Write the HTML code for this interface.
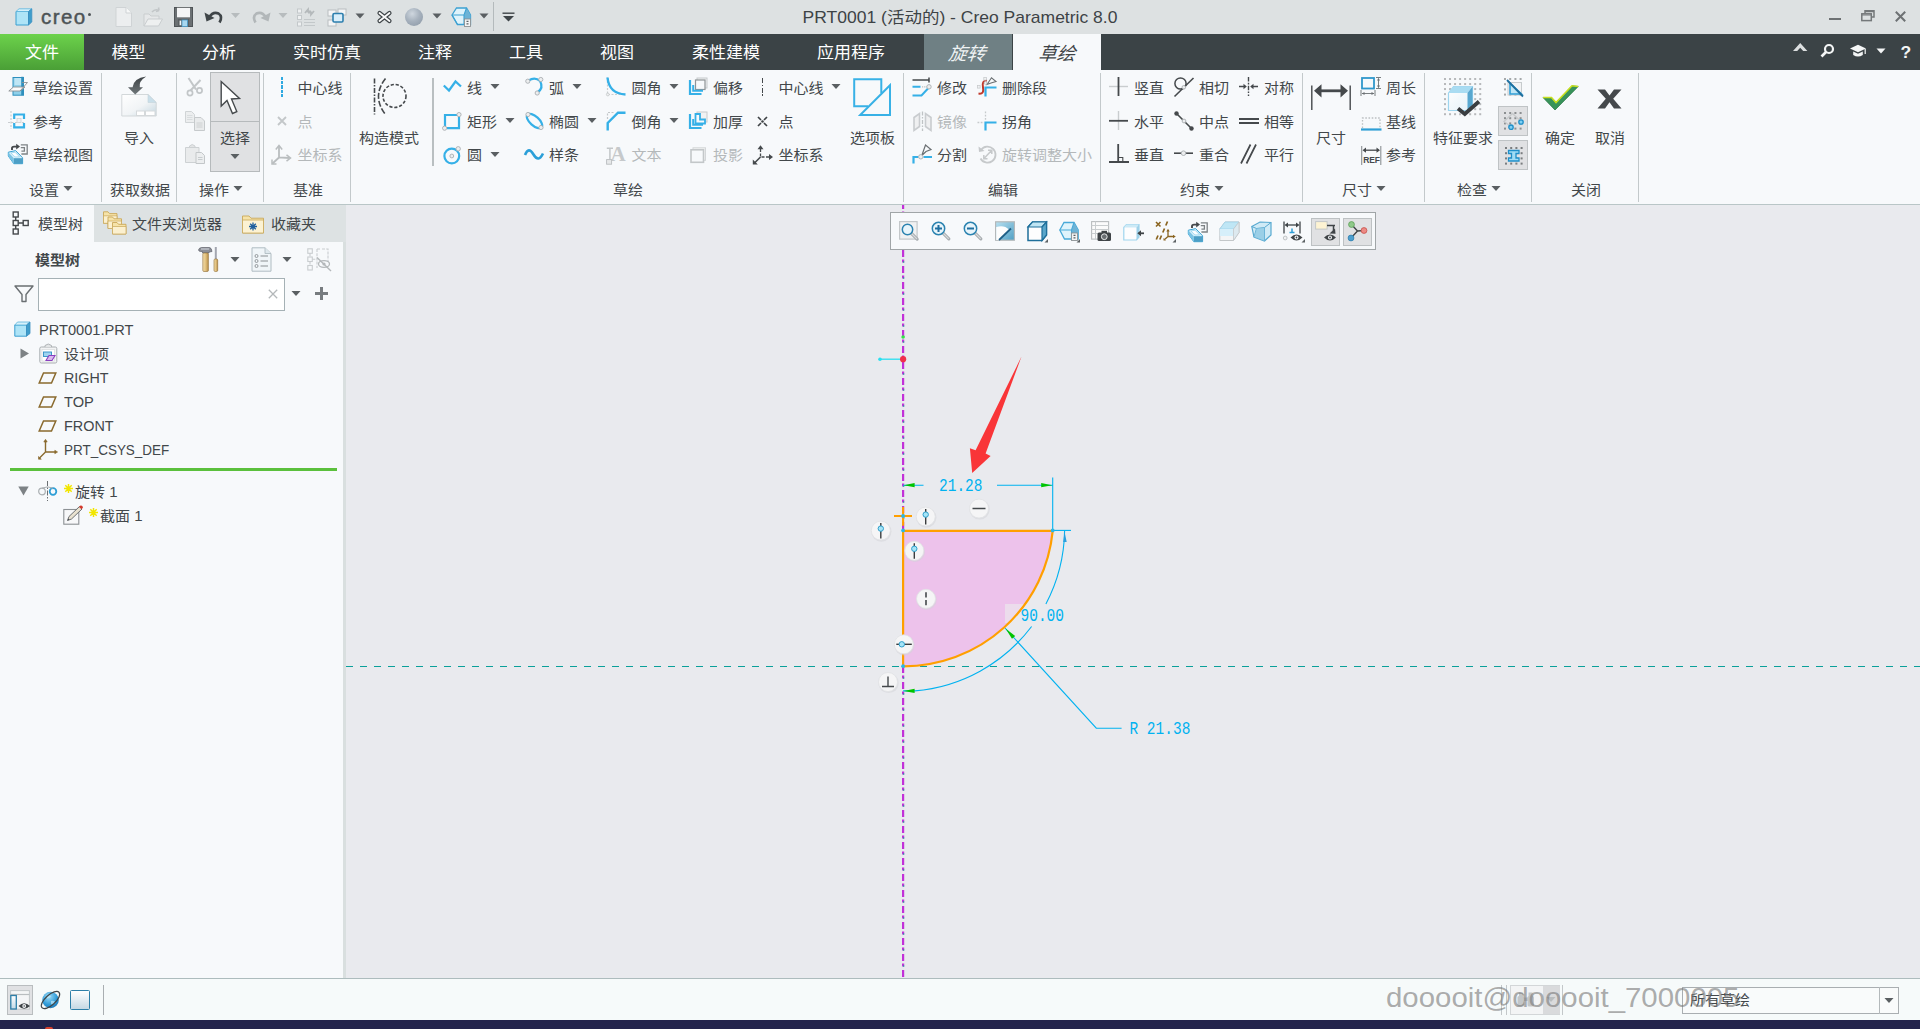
<!DOCTYPE html>
<html lang="zh-CN"><head><meta charset="utf-8"><title>Creo Parametric</title>
<style>
*{box-sizing:border-box;margin:0;padding:0}
html,body{width:1920px;height:1029px;overflow:hidden;background:#f6f9fa}
body{position:relative;font-family:"Liberation Sans","Noto Sans CJK SC",sans-serif;font-size:15px;color:#3a3f42}
.a{position:absolute}
.t{position:absolute;white-space:nowrap;line-height:20px;height:20px;font-size:15px;color:#42474a;transform:scaleY(.92)}
.g{color:#b4b8ba}
.t.c{transform:translateX(-50%) scaleY(.92)}
.l{transform-origin:left center}
.sep{position:absolute;width:1px;background:#c3c9cb;top:73px;height:129px}
.dd{position:absolute;width:0;height:0;border-left:4.6px solid transparent;border-right:4.6px solid transparent;border-top:5.2px solid #5a5f62}
svg{position:absolute;overflow:visible}
#title{left:0;top:0;width:1920px;height:34px;background:#dde1e2}
#tabs{left:0;top:34px;width:1920px;height:36px;background:#3b4346}
#file{left:0;top:34px;width:84px;height:36px;background:linear-gradient(#6cd24b,#4a9f36)}
.tab{position:absolute;top:41px;height:24px;line-height:24px;font-size:17px;color:#fff;white-space:nowrap;transform:translateX(-50%) scaleY(.93)}
#ribbon{left:0;top:70px;width:1920px;height:134px;background:#f7f9fb}
#ribline{left:0;top:204px;width:1920px;height:1px;background:#b9c6c7}
#left{left:0;top:205px;width:343px;height:773px;background:#f7f9fb}
#canvas{left:346px;top:205px;width:1574px;height:773px;background:#e9eaee}
#status{left:0;top:978px;width:1920px;height:42px;background:#f6fafa;border-top:1px solid #adbcbd}
#dark{left:0;top:1020px;width:1920px;height:9px;background:#23244c}
</style></head>
<body>
<!-- p1 -->
<div class="a" id="title"></div>
<svg style="left:15px;top:8px" width="18" height="18" viewBox="0 0 18 18"><path d="M1 3.5 L13.5 3.5 L13.5 17 L1 17Z" fill="#aee4f7" stroke="#3b9fd0" stroke-width="1"/><path d="M1 3.5 L4 0.8 L16.8 0.8 L13.5 3.5Z" fill="#d6f1fb" stroke="#5ab4dc" stroke-width=".8"/><path d="M13.5 3.5 L16.8 0.8 L16.8 14 L13.5 17Z" fill="#3f9dcb" stroke="#3b8fc0" stroke-width=".8"/></svg>
<div class="t" style="left:41px;top:4.5px;font-size:20.5px;letter-spacing:1.4px;color:#4d5356;-webkit-text-stroke:.45px #4d5356;line-height:24px;height:24px;transform:none">creo</div><div class="a" style="left:87.8px;top:13px;width:3px;height:3px;border-radius:50%;background:#4d5356"></div>
<svg style="left:115px;top:7px" width="18" height="20" viewBox="0 0 18 20"><path d="M1 .5 H11 L16.5 6 V19.5 H1Z" fill="#eceeef" stroke="#cfd3d5"/><path d="M11 .5 V6 H16.5" fill="#f7f8f8" stroke="#cfd3d5"/></svg>
<svg style="left:143px;top:7px" width="20" height="20" viewBox="0 0 20 20"><path d="M1 19 V7 H6 L8 9 H16 V12" fill="#e6e8e9" stroke="#c9cdcf"/><path d="M1 19 L5 12 H19.5 L15.5 19Z" fill="#eef0f0" stroke="#c9cdcf"/><path d="M9 5 Q12 1.5 16 3.5 M16 3.5 L15.5 .5 M16 3.5 L13 4.5" fill="none" stroke="#c2c6c8" stroke-width="1.6"/></svg>
<svg style="left:174px;top:7px" width="19" height="20" viewBox="0 0 19 20"><rect x=".5" y=".5" width="18" height="19" fill="#6b7073" stroke="#4f5457"/><rect x="3" y=".8" width="13" height="9.5" fill="#f4f5f6"/><rect x="4" y="12" width="11" height="7.5" fill="#5a5f62"/><rect x="8" y="13" width="5.5" height="6.5" fill="#a9d8f0" stroke="#4b9cc9" stroke-width=".8"/><rect x="5.6" y="13.6" width="1.6" height="4.6" fill="#f4f5f6"/></svg>
<svg style="left:204px;top:9px" width="20" height="16" viewBox="0 0 20 16"><path d="M5 8.5 Q9 2 14.5 4.5 Q19 7.5 15.5 13.5" fill="none" stroke="#3f4548" stroke-width="2.6"/><path d="M.5 3.5 L2.5 12.5 L10.5 9Z" fill="#3f4548"/></svg>
<svg style="left:230px;top:12px" width="11" height="8" viewBox="0 0 11 8"><path d="M1 0.9 h9 l-4.5 5.2Z" fill="#b7bcbe"/></svg>
<svg style="left:251px;top:9px" width="20" height="16" viewBox="0 0 20 16"><path d="M15 8.5 Q11 2 5.5 4.5 Q1 7.5 4.5 13.5" fill="none" stroke="#b2b7b9" stroke-width="2.6"/><path d="M19.5 3.5 L17.5 12.5 L9.5 9Z" fill="#b2b7b9"/></svg>
<svg style="left:278px;top:12px" width="11" height="8" viewBox="0 0 11 8"><path d="M0.5 0.9 h9 l-4.5 5.2Z" fill="#b7bcbe"/></svg>
<svg style="left:297px;top:7px" width="20" height="20" viewBox="0 0 20 20"><g fill="#eef0f1" stroke="#c3c8ca" stroke-width="1"><rect x=".5" y="2" width="4" height="4"/><rect x=".5" y="8.5" width="4" height="4"/><rect x=".5" y="15" width="4" height="4"/></g><g stroke="#c3c8ca" stroke-width="1.2"><path d="M7 12.5 H18 M7 15.5 H18 M7 18.5 H18"/></g><path d="M8 6 L11 2.5 L11 4.5 H14 M17 4 L14 7.5 L14 5.5 H11" fill="none" stroke="#b4b9bb" stroke-width="1.8"/></svg>
<svg style="left:327px;top:8px" width="20" height="19" viewBox="0 0 20 19"><g fill="#f4f5f6" stroke="#b9bec0"><rect x="1" y="2" width="8" height="6"/><rect x="11" y="1" width="8" height="6"/><rect x="1" y="12" width="8" height="6"/></g><rect x="6" y="5.5" width="10" height="8.5" rx="1.2" fill="#d9eefa" stroke="#2d7fae" stroke-width="1.6"/></svg>
<svg style="left:355px;top:13px" width="11" height="8" viewBox="0 0 11 8"><path d="M0.5 0.4 h9 l-4.5 5.2Z" fill="#5a5f62"/></svg>
<svg style="left:377px;top:11px" width="15" height="12" viewBox="0 0 15 12"><path d="M2.5 2 L12.5 10 M12.5 2 L2.5 10" stroke="#3f4548" stroke-width="4.2" stroke-linecap="round"/><path d="M2.5 2 L12.5 10 M12.5 2 L2.5 10" stroke="#fbfbfb" stroke-width="1.8" stroke-linecap="round"/></svg>
<div class="a" style="left:405px;top:8px;width:18px;height:18px;border-radius:50%;background:radial-gradient(circle at 40% 32%,#cfd7df 0,#a7b2be 45%,#8895a3 100%)"></div>
<svg style="left:432px;top:13px" width="11" height="8" viewBox="0 0 11 8"><path d="M0.5 0.4 h9 l-4.5 5.2Z" fill="#5a5f62"/></svg>
<svg style="left:451px;top:7px" width="21" height="20" viewBox="0 0 21 20"><path d="M1 8 L5.5 1 L15.5 1 L19.5 8 L19.5 17.5 L6.5 17.5Z" fill="#dff3fb" stroke="#3da1d2" stroke-width="1.3"/><path d="M15.5 1 L19.5 8 V17.5 H13 V8Z" fill="#6db3d6"/><path d="M1 8 H13 L15.5 1 M6.5 17.5 L1 8 M13 8 V17.5" fill="none" stroke="#3da1d2" stroke-width="1.1"/><rect x="13.5" y="12" width="6" height="7.5" fill="#f3f4f5" stroke="#8d9294" stroke-width=".9"/><path d="M15.5 14.3 h2 M15.5 16.8 h2" stroke="#5d6265" stroke-width="1.2"/></svg>
<svg style="left:479px;top:13px" width="11" height="8" viewBox="0 0 11 8"><path d="M0.5 0.4 h9 l-4.5 5.2Z" fill="#5a5f62"/></svg>
<div class="a" style="left:493px;top:2px;width:1px;height:29px;background:#b4babc"></div>
<svg style="left:502px;top:12px" width="13" height="10" viewBox="0 0 13 10"><path d="M.5 1.2 H12.5" stroke="#3f4548" stroke-width="1.4"/><path d="M1 4 H12 L6.5 9.5Z" fill="#3f4548"/></svg>
<div class="t c" id="ttl" style="left:960px;top:5px;font-size:17.5px;line-height:24px;height:24px;color:#3d4346">PRT0001 (活动的) - Creo Parametric 8.0</div>
<div class="a" style="left:1829px;top:17.5px;width:11.5px;height:2.6px;background:#6d7173"></div>
<svg style="left:1860.5px;top:10.2px" width="14" height="12" viewBox="0 0 14 12"><path d="M4 3 V.8 H13 V7 H10.5" fill="none" stroke="#74787a" stroke-width="1.5"/><rect x=".8" y="3.8" width="9.5" height="6.8" fill="none" stroke="#74787a" stroke-width="1.5"/><path d="M.8 5 H10.3 M4 1.600 H13" stroke="#74787a" stroke-width="1.200"/></svg>
<svg style="left:1894.8px;top:10.5px" width="11" height="11" viewBox="0 0 11 11"><path d="M.8 .8 L10.2 10.2 M10.2 .8 L.8 10.2" stroke="#6d7173" stroke-width="2"/></svg>
<div class="a" id="tabs"></div><div class="a" id="file"></div>
<div class="a" style="left:924px;top:34px;width:87.5px;height:36px;background:#6f8084"></div>
<div class="a" style="left:1013px;top:34px;width:88px;height:36px;background:#f7f9fb"></div>
<div class="tab" style="left:42px">文件</div>
<div class="tab" style="left:128.5px">模型</div>
<div class="tab" style="left:219px">分析</div>
<div class="tab" style="left:327px">实时仿真</div>
<div class="tab" style="left:435px">注释</div>
<div class="tab" style="left:526px">工具</div>
<div class="tab" style="left:617px">视图</div>
<div class="tab" style="left:726px">柔性建模</div>
<div class="tab" style="left:851px">应用程序</div>
<div class="tab" style="left:967px;top:41.5px;font-size:18.5px;font-style:italic;transform:translateX(-50%) scaleY(.98) skewX(-6deg);color:#eef2f3">旋转</div>
<div class="tab" style="left:1056.5px;top:41.5px;font-size:18.5px;font-style:italic;transform:translateX(-50%) scaleY(.98) skewX(-6deg);color:#3f4447">草绘</div>
<svg style="left:1793px;top:43px" width="15" height="9" viewBox="0 0 15 9"><path d="M0 8 L7.2 0 L14.4 8 H10.2 L7.2 4.8 L4.2 8Z" fill="#dcdfe0"/></svg>
<svg style="left:1820px;top:43px" width="15" height="15" viewBox="0 0 15 15"><circle cx="9" cy="6" r="4" fill="none" stroke="#f4f6f6" stroke-width="2.2"/><path d="M6 9 L1.5 13.5" stroke="#f4f6f6" stroke-width="2.6"/></svg>
<svg style="left:1849px;top:44px" width="18" height="14" viewBox="0 0 18 14"><path d="M9 .8 L17 4.5 L9 8.2 L1 4.5Z" fill="#f4f6f6"/><path d="M4.2 7.5 V11 Q9 14 13.8 11 V7.5 L9 9.8Z" fill="#f4f6f6"/><path d="M16.2 5 V10" stroke="#f4f6f6" stroke-width="1.2"/></svg>
<svg style="left:1876px;top:48px" width="11" height="8" viewBox="0 0 11 8"><path d="M0.5 0.4 h9 l-4.5 5.2Z" fill="#f4f6f6"/></svg>
<div class="t" style="left:1900.5px;top:40.5px;font-size:17.5px;font-weight:bold;color:#f4f6f6;line-height:22px;height:22px">?</div>
<!-- p2 -->
<div class="a" id="ribbon"></div><div class="a" id="ribline"></div>
<div class="sep" style="left:101px;"></div>
<div class="sep" style="left:176px;"></div>
<div class="sep" style="left:263px;"></div>
<div class="sep" style="left:350px;"></div>
<div class="sep" style="left:903px;"></div>
<div class="sep" style="left:1100px;"></div>
<div class="sep" style="left:1302px;"></div>
<div class="sep" style="left:1424px;"></div>
<div class="sep" style="left:1531px;"></div>
<div class="sep" style="left:1638px;"></div>
<div class="a" style="left:432px;top:78px;width:2px;height:88px;background:#b9bfc1"></div>
<svg style="left:8px;top:76px" width="20" height="20" viewBox="0 0 20 20"><rect x="5" y="1.5" width="10.5" height="17.7" fill="#8fd0ea" stroke="#2e8fbd" stroke-width="1"/><rect x="6.5" y="2" width="7.5" height="7" fill="#bfe6f5"/><path d="M13.2 .8 V19.2 H15.5 V.8Z" fill="#2e8fbd"/><path d="M.8 15 L5.5 11 H17 L12 15Z" fill="#fbfbfb" stroke="#8c9194" stroke-width=".9"/><path d="M12 15 L19.5 6.5 H14" fill="none" stroke="#8c9194" stroke-width=".9"/></svg>
<div class="t " style="left:33px;top:77.5px;">草绘设置</div>
<svg style="left:8px;top:111px" width="18" height="18" viewBox="0 0 18 18"><path d="M3 0 V18 M0 11.5 H17" stroke="#c9cdd0" stroke-width="1.2" stroke-dasharray="2 1.5"/><path d="M6.2 8 V3.5 H16 V8 M6.2 12 V16.3 H16 V12" fill="none" stroke="#35b0e7" stroke-width="2.2"/><rect x="9" y="7.5" width="4" height="4" fill="#f2f3f4" stroke="#cfd3d5" stroke-width=".8"/></svg>
<div class="t " style="left:33px;top:111.5px;">参考</div>
<svg style="left:8px;top:144px" width="20" height="20" viewBox="0 0 20 20"><path d="M12.8 .8 H19.2 V10 H13.4 M12.8 3.6 H16.4 V7.2 H13.4" fill="none" stroke="#7d8285" stroke-width="1.3"/><path d="M4 6 V4.2 Q4 2.6 6 2.6 H9" fill="none" stroke="#45494c" stroke-width="1.9"/><path d="M8.2 -.2 L12 2.6 L8.2 5.4Z" fill="#45494c"/><path d="M.3 8.2 L7.6 6.6 L14.6 13.8 V19.7 H5.8 L.3 12Z" fill="#d4effa" stroke="#3aa3d4" stroke-width="1"/><path d="M5.8 14.2 H14.6 V19.7 H5.8Z" fill="#4d9fc6"/><path d="M.3 8.2 L5.8 14.2 V19.7 L.3 12Z" fill="#7cc4e4"/><path d="M3 9 L7 8.2 L11.5 12.8 L7 12.9Z" fill="#fdfeff" stroke="#8fd0ec" stroke-width=".7"/></svg>
<div class="t " style="left:33px;top:144.5px;">草绘视图</div>
<div class="t " style="left:29px;top:179.5px;">设置</div>
<svg style="left:63px;top:185px" width="11" height="8" viewBox="0 0 11 8"><path d="M0.5 0.9 h9 l-4.5 5.2Z" fill="#5a5f62"/></svg>
<svg style="left:121px;top:76px" width="36" height="41" viewBox="0 0 36 41"><defs><linearGradient id="ig" x1="0" y1="0" x2="1" y2="1"><stop offset="0" stop-color="#fff"/><stop offset=".55" stop-color="#f1f4f6"/><stop offset="1" stop-color="#c3d6e0"/></linearGradient><linearGradient id="ia" x1="0" y1="0" x2="0" y2="1"><stop offset="0" stop-color="#3d4245"/><stop offset="1" stop-color="#70777a"/></linearGradient></defs><path d="M.8 18.5 H27 L35.2 26.5 V40 H.8Z" fill="url(#ig)" stroke="#d3d8da" stroke-width="1"/><path d="M27 18.5 V26.5 H35.2Z" fill="#c9dfea" stroke="#c4d3da" stroke-width=".6"/><rect x="15.5" y="35" width="8" height="4.5" fill="#fff" stroke="#d5d9db"/><rect x="24.5" y="35" width="9.5" height="4.5" fill="#fff" stroke="#d5d9db"/><path d="M25.2 .4 Q12.5 2 11.6 11.3 H7 L14.2 18.4 L22 11.3 H18.8 Q17.5 5 25.2 .4Z" fill="url(#ia)"/></svg>
<div class="t c" style="left:139px;top:127.5px;">导入</div>
<div class="t c" style="left:140px;top:179.5px;">获取数据</div>
<svg style="left:185px;top:77px" width="19" height="20" viewBox="0 0 19 20"><path d="M3.5 1 L11 12.5 M15.5 3 L5.5 13.5" stroke="#c2c6c8" stroke-width="2" fill="none"/><circle cx="5" cy="16" r="2.6" fill="none" stroke="#c2c6c8" stroke-width="1.7"/><circle cx="14.5" cy="13.5" r="2.6" fill="none" stroke="#c2c6c8" stroke-width="1.7"/></svg>
<svg style="left:185px;top:111px" width="20" height="20" viewBox="0 0 20 20"><path d="M.5 .5 H6.5 L9.5 3.5 V11.5 H.5Z" fill="#eceeef" stroke="#d0d4d6"/><path d="M2 4.5 H7.5 M2 6.5 H7.5 M2 8.5 H7.5" stroke="#d7dadc" stroke-width=".9"/><path d="M9.5 6.5 H16 L19.5 10 V19.5 H9.5Z" fill="#e9ebec" stroke="#c6cacc"/><path d="M11.5 12 H17.5 M11.5 14 H17.5 M11.5 16 H17.5" stroke="#c9cdcf" stroke-width=".9"/></svg>
<svg style="left:185px;top:144px" width="20" height="20" viewBox="0 0 20 20"><path d="M.5 3.5 H14 V18.5 H.5Z" fill="#e9ebec" stroke="#cdd1d3"/><path d="M4.5 3.5 V2 Q7.2 -1 10 2 V3.5Z" fill="#e3e5e6" stroke="#cdd1d3"/><path d="M11 8.5 H16.5 L19.5 11.5 V19.5 H11Z" fill="#eceeef" stroke="#c3c7c9"/><path d="M13 13.5 H17.5 M13 15.5 H17.5" stroke="#c3c7c9" stroke-width=".9"/></svg>
<div class="a" style="left:210px;top:72px;width:50px;height:100px;background:#e0e1e3;border:1px solid #b6babc"></div>
<div class="a" style="left:211px;top:121px;width:48px;height:1px;background:#b6babc"></div>
<svg style="left:220px;top:80px" width="21" height="36" viewBox="0 0 21 36"><path d="M1.2 1.5 V26 L7 20.5 L12.5 33.5 L16.8 31.6 L11.5 19 L19.5 18.5Z" fill="#fff" stroke="#45494c" stroke-width="1.4" stroke-linejoin="miter"/></svg>
<div class="t c" style="left:235px;top:127.5px;">选择</div>
<svg style="left:230px;top:153px" width="11" height="8" viewBox="0 0 11 8"><path d="M0.5 0.9 h9 l-4.5 5.2Z" fill="#5a5f62"/></svg>
<div class="t " style="left:199px;top:179.5px;">操作</div>
<svg style="left:233px;top:185px" width="11" height="8" viewBox="0 0 11 8"><path d="M0.5 0.9 h9 l-4.5 5.2Z" fill="#5a5f62"/></svg>
<div class="a" style="left:281px;top:77px;width:2px;height:20px;background:repeating-linear-gradient(#2fa9e1 0,#2fa9e1 3.2px,transparent 3.2px,transparent 4.2px)"></div>
<div class="t " style="left:297.5px;top:77.5px;">中心线</div>
<svg style="left:277px;top:116px" width="10" height="10" viewBox="0 0 10 10"><path d="M1 1 L9 9 M9 1 L1 9" stroke="#c3c7c9" stroke-width="1.8"/></svg>
<div class="t g" style="left:297.5px;top:111.5px;">点</div>
<svg style="left:271px;top:145px" width="21" height="20" viewBox="0 0 21 20"><path d="M8 1.5 V12.5 L18.5 13 M8 12.5 L1.5 18.5" fill="none" stroke="#b9bdbf" stroke-width="1.8"/><path d="M4.8 4.5 L8 .5 L11.2 4.5 M15.5 9.8 L19.5 13 L15.5 16.2 M1 14.5 L1 19 L5.5 19" fill="none" stroke="#b9bdbf" stroke-width="1.5"/></svg>
<div class="t g" style="left:297.5px;top:144.5px;">坐标系</div>
<div class="t c" style="left:308px;top:179.5px;">基准</div>
<!-- p3 -->
<svg style="left:372px;top:78px" width="36" height="37" viewBox="0 0 36 37"><path d="M2.5 .5 V36.5" stroke="#45494c" stroke-width="1.6" stroke-dasharray="5 1.5 1.5 1.5" fill="none"/><path d="M13.5 .5 Q-.5 18.5 13.5 36.5" stroke="#45494c" stroke-width="1.6" stroke-dasharray="6 2" fill="none"/><circle cx="22.5" cy="18" r="11.5" fill="none" stroke="#45494c" stroke-width="1.6" stroke-dasharray="3.2 1.8"/></svg>
<div class="t c" style="left:389px;top:127.5px;">构造模式</div>
<svg style="left:443px;top:80px" width="19" height="12" viewBox="0 0 19 12"><path d="M.8 5.5 L6 10.5 L12.5 1.5 L18 6.5" fill="none" stroke="#35b0e7" stroke-width="2.2"/></svg>
<div class="t " style="left:467px;top:77.5px;">线</div>
<svg style="left:490px;top:83px" width="11" height="8" viewBox="0 0 11 8"><path d="M0.5 0.9 h9 l-4.5 5.2Z" fill="#5a5f62"/></svg>
<svg style="left:442px;top:112px" width="20" height="19" viewBox="0 0 20 19"><path d="M3 15 V3 H15.5 M17 5 V16.2 H5" fill="none" stroke="#35b0e7" stroke-width="2.2"/><circle cx="17" cy="2.6" r="2.1" fill="#eceeef" stroke="#a9aeb1" stroke-width=".9"/><circle cx="2.6" cy="16.2" r="2.1" fill="#eceeef" stroke="#a9aeb1" stroke-width=".9"/></svg>
<div class="t " style="left:467px;top:111.5px;">矩形</div>
<svg style="left:505px;top:117px" width="11" height="8" viewBox="0 0 11 8"><path d="M0.5 0.9 h9 l-4.5 5.2Z" fill="#5a5f62"/></svg>
<svg style="left:443px;top:146px" width="19" height="19" viewBox="0 0 19 19"><circle cx="8.8" cy="10" r="7.4" fill="none" stroke="#35b0e7" stroke-width="2.2"/><circle cx="8.8" cy="10" r="1.9" fill="#eceeef" stroke="#a9aeb1" stroke-width=".9"/><circle cx="15.2" cy="2.8" r="2.2" fill="#eceeef" stroke="#a9aeb1" stroke-width=".9"/></svg>
<div class="t " style="left:467px;top:144.5px;">圆</div>
<svg style="left:490px;top:151px" width="11" height="8" viewBox="0 0 11 8"><path d="M0.5 0.9 h9 l-4.5 5.2Z" fill="#5a5f62"/></svg>
<svg style="left:525px;top:77px" width="19" height="20" viewBox="0 0 19 20"><path d="M3.5 3.5 Q10 -.5 15 4 Q19 11 12.5 15.5" fill="none" stroke="#35b0e7" stroke-width="2.2"/><circle cx="2.8" cy="4.2" r="2.1" fill="#eceeef" stroke="#a9aeb1" stroke-width=".9"/><circle cx="15.8" cy="2.5" r="2.1" fill="#eceeef" stroke="#a9aeb1" stroke-width=".9"/><circle cx="12.2" cy="16" r="2.1" fill="#eceeef" stroke="#a9aeb1" stroke-width=".9"/></svg>
<div class="t " style="left:549px;top:77.5px;">弧</div>
<svg style="left:572px;top:83px" width="11" height="8" viewBox="0 0 11 8"><path d="M0.5 0.9 h9 l-4.5 5.2Z" fill="#5a5f62"/></svg>
<svg style="left:525px;top:111px" width="19" height="20" viewBox="0 0 19 20"><ellipse cx="9.5" cy="10" rx="9.5" ry="4.6" transform="rotate(42 9.5 10)" fill="none" stroke="#35b0e7" stroke-width="2.2"/><circle cx="3" cy="3.5" r="2.1" fill="#eceeef" stroke="#a9aeb1" stroke-width=".9"/><circle cx="16" cy="16.5" r="2.1" fill="#eceeef" stroke="#a9aeb1" stroke-width=".9"/></svg>
<div class="t " style="left:549px;top:111.5px;">椭圆</div>
<svg style="left:587px;top:117px" width="11" height="8" viewBox="0 0 11 8"><path d="M0.5 0.9 h9 l-4.5 5.2Z" fill="#5a5f62"/></svg>
<svg style="left:524px;top:148px" width="20" height="13" viewBox="0 0 20 13"><path d="M1 7 Q4.5 -2 9.5 6.5 Q14.5 15 19 5.5" fill="none" stroke="#2b9fd8" stroke-width="2.6"/></svg>
<div class="t " style="left:549px;top:144.5px;">样条</div>
<svg style="left:606px;top:77px" width="20" height="19" viewBox="0 0 20 19"><path d="M1.5 .5 V17.5 H19" fill="none" stroke="#c9cdcf" stroke-width="1.2" stroke-dasharray="2 1.5"/><path d="M1.5 .5 Q3 16.5 19.5 17.5" fill="none" stroke="#35b0e7" stroke-width="2.4"/><circle cx="1.8" cy="17.5" r="1.4" fill="#f0f1f2" stroke="#c2c6c8" stroke-width=".8"/></svg>
<div class="t " style="left:631.5px;top:77.5px;">圆角</div>
<svg style="left:669px;top:83px" width="11" height="8" viewBox="0 0 11 8"><path d="M0.5 0.9 h9 l-4.5 5.2Z" fill="#5a5f62"/></svg>
<svg style="left:606px;top:111px" width="20" height="20" viewBox="0 0 20 20"><path d="M1.5 8 V1.5 H9" fill="none" stroke="#c3c7c9" stroke-width="1.2" stroke-dasharray="2 1.5"/><path d="M1.7 19.5 V12 L12 1.7 H19.5" fill="none" stroke="#35b0e7" stroke-width="2.4"/></svg>
<div class="t " style="left:631.5px;top:111.5px;">倒角</div>
<svg style="left:669px;top:117px" width="11" height="8" viewBox="0 0 11 8"><path d="M0.5 0.9 h9 l-4.5 5.2Z" fill="#5a5f62"/></svg>
<div class="t" style="left:610.5px;top:142px;font-family:'Liberation Serif',serif;font-weight:bold;font-size:21px;line-height:24px;height:24px;color:#c6c9cb;transform:none">A</div>
<svg style="left:606px;top:147px" width="12" height="18" viewBox="0 0 12 18"><path d="M.8 1.200 H7 M3.900 1.200 V12.500" stroke="#c3c7c9" stroke-width="1.500" fill="none"/><rect x=".6" y="12.600" width="5" height="4.600" fill="#e6e8e9" stroke="#b9bdbf" stroke-width=".9"/></svg>
<div class="t g" style="left:631.5px;top:144.5px;">文本</div>
<svg style="left:688px;top:77px" width="20" height="19" viewBox="0 0 20 19"><rect x="9" y="1" width="10" height="10" fill="#f1f2f3" stroke="#c6cacc"/><rect x="7.5" y="3" width="9.5" height="9.5" fill="#f7f9fb" stroke="#8e9396" stroke-width="1.2"/><path d="M2 3 V17 H13.5" fill="none" stroke="#35b0e7" stroke-width="2.2"/><path d="M5.2 8 V13.8 H15" fill="none" stroke="#35b0e7" stroke-width="2"/></svg>
<div class="t " style="left:713px;top:77.5px;">偏移</div>
<svg style="left:688px;top:111px" width="20" height="19" viewBox="0 0 20 19"><rect x="9" y="1" width="10" height="10" fill="#f1f2f3" stroke="#c6cacc"/><path d="M7.5 3 H12 V8.5 H17 V12.5 H7.5Z" fill="#f7f9fb" stroke="#35b0e7" stroke-width="1.8"/><path d="M2 3 V17 H13.5" fill="none" stroke="#35b0e7" stroke-width="2.2"/><path d="M5.2 8 V13.8 H15" fill="none" stroke="#35b0e7" stroke-width="2"/></svg>
<div class="t " style="left:713px;top:111.5px;">加厚</div>
<svg style="left:690px;top:147px" width="17" height="17" viewBox="0 0 17 17"><rect x="3" y=".8" width="12.5" height="12.5" fill="#f1f2f3" stroke="#d3d6d8"/><rect x="1" y="2.8" width="12.5" height="12.5" fill="#f7f9fb" stroke="#c3c7c9" stroke-width="1.6"/></svg>
<div class="t g" style="left:713px;top:144.5px;">投影</div>
<div class="a" style="left:761.5px;top:78px;width:1.6px;height:19px;background:repeating-linear-gradient(#45494c 0,#45494c 5px,transparent 5px,transparent 6.5px,#45494c 6.5px,#45494c 8px,transparent 8px,transparent 9.5px)"></div>
<div class="t " style="left:778.5px;top:77.5px;">中心线</div>
<svg style="left:831px;top:83px" width="11" height="8" viewBox="0 0 11 8"><path d="M0.5 0.9 h9 l-4.5 5.2Z" fill="#5a5f62"/></svg>
<svg style="left:757px;top:115.5px" width="11" height="11" viewBox="0 0 11 11"><path d="M1 1 L4 4 M10 1 L7 4 M1 10 L4 7 M10 10 L7 7" stroke="#3f4346" stroke-width="1.7"/><circle cx="5.5" cy="5.5" r="1.3" fill="#3f4346"/></svg>
<div class="t " style="left:778.5px;top:111.5px;">点</div>
<svg style="left:752px;top:145px" width="22" height="20" viewBox="0 0 22 20"><path d="M8.5 4 V12 H17" fill="none" stroke="#45494c" stroke-width="1.3" stroke-dasharray="3 1.5"/><path d="M8.5 12 L2.5 18" stroke="#45494c" stroke-width="1.6"/><path d="M5.5 4.2 L8.5 .3 L11.5 4.2Z M17 9 L21 12 L17 15Z M.8 14.5 V19.5 H5.8Z" fill="#45494c"/></svg>
<div class="t " style="left:778.5px;top:144.5px;">坐标系</div>
<svg style="left:853px;top:78px" width="39" height="39" viewBox="0 0 39 39"><path d="M28.3 15 V1.2 H1.2 V28.3 H15" fill="none" stroke="#38b1e6" stroke-width="2"/><path d="M37 7.2 V37 H7.2Z" fill="none" stroke="#38b1e6" stroke-width="2"/></svg>
<div class="t c" style="left:872.5px;top:127.5px;">选项板</div>
<div class="t c" style="left:628px;top:179.5px;">草绘</div>
<svg style="left:912px;top:77px" width="21" height="20" viewBox="0 0 21 20"><path d="M.5 3 H17 M17 .5 V5.5" stroke="#45494c" stroke-width="1.5" fill="none"/><path d="M.5 9.8 H8.5 M.5 18.5 H9.5 L16 11.5" fill="none" stroke="#35b0e7" stroke-width="2"/><path d="M10 9.8 H15" stroke="#b9bdbf" stroke-width="1.2" stroke-dasharray="1.2 1"/><circle cx="17" cy="9.8" r="2.2" fill="#eceeef" stroke="#a9aeb1" stroke-width=".9"/></svg>
<div class="t " style="left:937px;top:77.5px;">修改</div>
<svg style="left:912px;top:111px" width="21" height="20" viewBox="0 0 21 20"><path d="M2 6.5 L7.5 2.5 V15.5 L2 19.5Z M19 6.5 L13.5 2.5 V15.5 L19 19.5Z" fill="#eff0f1" stroke="#c9cccf" stroke-width="1.6"/><path d="M10.5 .5 V20" stroke="#bfc3c5" stroke-width="1.3" stroke-dasharray="4 1.5 1.5 1.5"/></svg>
<div class="t g" style="left:937px;top:111.5px;">镜像</div>
<svg style="left:912px;top:144px" width="21" height="20" viewBox="0 0 21 20"><path d="M1.5 19.5 V13 H6.5 M11.5 13 H20" fill="none" stroke="#35b0e7" stroke-width="2.2"/><path d="M9.8 11.5 L13.5 1 L19 5.5 L14 7.5Z" fill="#f7f9fb" stroke="#6a6f72" stroke-width="1.2"/><circle cx="8.8" cy="12.8" r="2.2" fill="#eceeef" stroke="#a9aeb1" stroke-width=".9"/></svg>
<div class="t " style="left:937px;top:144.5px;">分割</div>
<svg style="left:977px;top:77px" width="21" height="20" viewBox="0 0 21 20"><path d="M1.5 16.5 Q7.5 17.5 6 10.5 Q4.5 3.5 10 3.5" fill="none" stroke="#c0392b" stroke-width="2"/><path d="M8.5 19.5 V10.5 H19.5" fill="none" stroke="#35b0e7" stroke-width="2.2"/><path d="M10 7.5 L14.5 .8 L19 4.5 L14 6Z" fill="#f7f9fb" stroke="#6a6f72" stroke-width="1.1"/><rect x=".5" y="8.5" width="2.6" height="2.6" fill="#f1f2f3" stroke="#c3c7c9" stroke-width=".7"/><rect x="6.8" y=".5" width="2.6" height="2.6" fill="#f1f2f3" stroke="#c3c7c9" stroke-width=".7"/><circle cx="8.5" cy="6" r="1.4" fill="#f1f2f3" stroke="#b4b8ba" stroke-width=".7"/></svg>
<div class="t " style="left:1002px;top:77.5px;">删除段</div>
<svg style="left:977px;top:111px" width="21" height="20" viewBox="0 0 21 20"><path d="M8.5 .5 V9 M.5 11.5 H7" stroke="#c6cacc" stroke-width="1.3" stroke-dasharray="1.8 1.4"/><path d="M8.5 19.5 V11.5 H19.5" fill="none" stroke="#35b0e7" stroke-width="2.2"/></svg>
<div class="t " style="left:1002px;top:111.5px;">拐角</div>
<svg style="left:978px;top:145px" width="19" height="19" viewBox="0 0 19 19"><path d="M3 5 A8 8 0 1 1 2.5 13.5" fill="none" stroke="#c6c9cb" stroke-width="1.8"/><path d="M.5 1.5 L1 7 L6.5 6Z" fill="#c6c9cb"/><path d="M6 13.5 L13.5 5.5 M13.8 9 V5.2 H10 M5.8 10 V13.8 H9.5" fill="none" stroke="#c6c9cb" stroke-width="1.5"/></svg>
<div class="t g" style="left:1002px;top:144.5px;">旋转调整大小</div>
<div class="t c" style="left:1003px;top:179.5px;">编辑</div>
<!-- p4 -->
<svg style="left:1109px;top:77px" width="19" height="19" viewBox="0 0 19 19"><path d="M0 9.5 H19" stroke="#c9cdcf" stroke-width="1.4"/><path d="M9.5 0 V19" stroke="#45494c" stroke-width="1.8"/></svg>
<div class="t " style="left:1134px;top:77.5px;">竖直</div>
<svg style="left:1109px;top:111px" width="19" height="19" viewBox="0 0 19 19"><path d="M9.5 0 V19" stroke="#c9cdcf" stroke-width="1.4"/><path d="M0 9.8 H19" stroke="#45494c" stroke-width="1.8"/></svg>
<div class="t " style="left:1134px;top:111.5px;">水平</div>
<svg style="left:1109px;top:144px" width="20" height="19" viewBox="0 0 20 19"><path d="M0 18 H20 M9.2 0 V18" stroke="#45494c" stroke-width="1.8" fill="none"/><path d="M9.2 13.5 H13.8 V18" stroke="#45494c" stroke-width="1.1" fill="none"/></svg>
<div class="t " style="left:1134px;top:144.5px;">垂直</div>
<svg style="left:1174px;top:76.5px" width="20" height="20" viewBox="0 0 20 20"><circle cx="6.5" cy="6.5" r="5.6" fill="none" stroke="#45494c" stroke-width="1.5"/><path d="M.5 19.5 L19.5 1" stroke="#45494c" stroke-width="1.6"/><circle cx="9.8" cy="10.3" r="1.8" fill="#eceeef" stroke="#a9aeb1" stroke-width=".9"/></svg>
<div class="t " style="left:1199px;top:77.5px;">相切</div>
<svg style="left:1174px;top:111px" width="20" height="20" viewBox="0 0 20 20"><path d="M2.5 2.5 L17.5 17.5" stroke="#45494c" stroke-width="1.6"/><circle cx="2.5" cy="2.5" r="2.2" fill="#45494c"/><circle cx="17.5" cy="17.5" r="2.2" fill="#45494c"/><circle cx="10" cy="10" r="1.9" fill="#eceeef" stroke="#a9aeb1" stroke-width=".9"/></svg>
<div class="t " style="left:1199px;top:111.5px;">中点</div>
<svg style="left:1174px;top:148px" width="19" height="10" viewBox="0 0 19 10"><path d="M0 5.2 H19" stroke="#45494c" stroke-width="1.6"/><circle cx="9.5" cy="5.2" r="2.3" fill="#eceeef" stroke="#a9aeb1" stroke-width=".9"/></svg>
<div class="t " style="left:1199px;top:144.5px;">重合</div>
<svg style="left:1239px;top:77px" width="19" height="19" viewBox="0 0 19 19"><path d="M9.5 0 V19" stroke="#45494c" stroke-width="1.4" stroke-dasharray="4.5 1.3 1.6 1.3"/><path d="M0 9.5 H6 M19 9.5 H13" stroke="#45494c" stroke-width="1.4"/><path d="M4.5 6.8 L7.8 9.5 L4.5 12.2Z M14.5 6.8 L11.2 9.5 L14.5 12.2Z" fill="#45494c"/></svg>
<div class="t " style="left:1264px;top:77.5px;">对称</div>
<div class="a" style="left:1239px;top:117.5px;width:20px;height:2px;background:#45494c"></div><div class="a" style="left:1239px;top:122px;width:20px;height:2px;background:#45494c"></div>
<div class="t " style="left:1264px;top:111.5px;">相等</div>
<svg style="left:1240px;top:144px" width="17" height="20" viewBox="0 0 17 20"><path d="M1 19.5 L10.5 .5 M6.5 19.5 L16 .5" stroke="#45494c" stroke-width="1.7"/></svg>
<div class="t " style="left:1264px;top:144.5px;">平行</div>
<div class="t " style="left:1180px;top:179.5px;">约束</div>
<svg style="left:1214px;top:185px" width="11" height="8" viewBox="0 0 11 8"><path d="M0.5 0.9 h9 l-4.5 5.2Z" fill="#5a5f62"/></svg>
<svg style="left:1311px;top:83px" width="40" height="27" viewBox="0 0 40 27"><path d="M.8 2.5 V27 M39.2 2.5 V27" stroke="#45494c" stroke-width="1.4"/><path d="M9 7.8 H31" stroke="#45494c" stroke-width="2.8"/><path d="M3 7.8 L10.5 1.2 V14.4Z M37 7.8 L29.5 1.2 V14.4Z" fill="#45494c"/></svg>
<div class="t c" style="left:1331px;top:127.5px;">尺寸</div>
<svg style="left:1361px;top:77px" width="21" height="19" viewBox="0 0 21 19"><rect x="1" y="1" width="12" height="10.5" fill="#f7f9fb" stroke="#2f97cb" stroke-width="1.8"/><path d="M0 13 V19 M14 13 V19 M1 16.5 H13 M15 .5 H20 M15 11.5 H20 M17.5 1.5 V10.5" stroke="#6a6f72" stroke-width=".9" fill="none"/><path d="M1 16.5 l2.5 -1.5 v3Z M13 16.5 l-2.5 -1.5 v3Z M17.5 1 l-1.5 2.5 h3Z M17.5 11 l-1.5 -2.5 h3Z" fill="#6a6f72"/></svg>
<div class="t " style="left:1386px;top:77.5px;">周长</div>
<svg style="left:1361px;top:117px" width="21" height="14" viewBox="0 0 21 14"><path d="M1.5 11 V1 H19 V11" fill="none" stroke="#bcc0c2" stroke-width="1.3" stroke-dasharray="1.6 1.6"/><path d="M0 12.5 H20.5" stroke="#2f9fd6" stroke-width="2.2"/></svg>
<div class="t " style="left:1386px;top:111.5px;">基线</div>
<svg style="left:1361px;top:146px" width="21" height="19" viewBox="0 0 21 19"><path d="M.7 0 V19 M19.8 0 V19" stroke="#8c9194" stroke-width="1.1"/><path d="M3 4.2 H17.5" stroke="#45494c" stroke-width="1.3"/><path d="M1.5 4.2 L5 1.6 V6.8Z M19 4.2 L15.5 1.6 V6.8Z" fill="#45494c"/></svg>
<div class="t" style="left:1363.2px;top:155px;font-size:8.5px;font-weight:bold;line-height:10px;height:10px;color:#45494c;letter-spacing:-.1px;transform:scaleY(1.15)">REF</div>
<div class="t " style="left:1386px;top:144.5px;">参考</div>
<div class="t " style="left:1342px;top:179.5px;">尺寸</div>
<svg style="left:1376px;top:185px" width="11" height="8" viewBox="0 0 11 8"><path d="M0.5 0.9 h9 l-4.5 5.2Z" fill="#5a5f62"/></svg>
<svg style="left:1444px;top:78px" width="38" height="38" viewBox="0 0 38 38"><g fill="#b7b9bb"><rect x="0" y="0" width="2" height="2"/><rect x="0" y="5.03" width="2" height="2"/><rect x="0" y="10.06" width="2" height="2"/><rect x="0" y="15.09" width="2" height="2"/><rect x="0" y="20.12" width="2" height="2"/><rect x="0" y="25.15" width="2" height="2"/><rect x="0" y="30.18" width="2" height="2"/><rect x="0" y="35.21" width="2" height="2"/><rect x="5.03" y="0" width="2" height="2"/><rect x="5.03" y="5.03" width="2" height="2"/><rect x="5.03" y="10.06" width="2" height="2"/><rect x="5.03" y="15.09" width="2" height="2"/><rect x="5.03" y="20.12" width="2" height="2"/><rect x="5.03" y="25.15" width="2" height="2"/><rect x="5.03" y="30.18" width="2" height="2"/><rect x="5.03" y="35.21" width="2" height="2"/><rect x="10.06" y="0" width="2" height="2"/><rect x="10.06" y="5.03" width="2" height="2"/><rect x="10.06" y="10.06" width="2" height="2"/><rect x="10.06" y="15.09" width="2" height="2"/><rect x="10.06" y="20.12" width="2" height="2"/><rect x="10.06" y="25.15" width="2" height="2"/><rect x="10.06" y="30.18" width="2" height="2"/><rect x="10.06" y="35.21" width="2" height="2"/><rect x="15.09" y="0" width="2" height="2"/><rect x="15.09" y="5.03" width="2" height="2"/><rect x="15.09" y="10.06" width="2" height="2"/><rect x="15.09" y="15.09" width="2" height="2"/><rect x="15.09" y="20.12" width="2" height="2"/><rect x="15.09" y="25.15" width="2" height="2"/><rect x="15.09" y="30.18" width="2" height="2"/><rect x="15.09" y="35.21" width="2" height="2"/><rect x="20.12" y="0" width="2" height="2"/><rect x="20.12" y="5.03" width="2" height="2"/><rect x="20.12" y="10.06" width="2" height="2"/><rect x="20.12" y="15.09" width="2" height="2"/><rect x="20.12" y="20.12" width="2" height="2"/><rect x="20.12" y="25.15" width="2" height="2"/><rect x="20.12" y="30.18" width="2" height="2"/><rect x="20.12" y="35.21" width="2" height="2"/><rect x="25.15" y="0" width="2" height="2"/><rect x="25.15" y="5.03" width="2" height="2"/><rect x="25.15" y="10.06" width="2" height="2"/><rect x="25.15" y="15.09" width="2" height="2"/><rect x="25.15" y="20.12" width="2" height="2"/><rect x="25.15" y="25.15" width="2" height="2"/><rect x="25.15" y="30.18" width="2" height="2"/><rect x="25.15" y="35.21" width="2" height="2"/><rect x="30.18" y="0" width="2" height="2"/><rect x="30.18" y="5.03" width="2" height="2"/><rect x="30.18" y="10.06" width="2" height="2"/><rect x="30.18" y="15.09" width="2" height="2"/><rect x="30.18" y="20.12" width="2" height="2"/><rect x="30.18" y="25.15" width="2" height="2"/><rect x="30.18" y="30.18" width="2" height="2"/><rect x="30.18" y="35.21" width="2" height="2"/><rect x="35.21" y="0" width="2" height="2"/><rect x="35.21" y="5.03" width="2" height="2"/><rect x="35.21" y="10.06" width="2" height="2"/><rect x="35.21" y="15.09" width="2" height="2"/><rect x="35.21" y="20.12" width="2" height="2"/><rect x="35.21" y="25.15" width="2" height="2"/><rect x="35.21" y="30.18" width="2" height="2"/><rect x="35.21" y="35.21" width="2" height="2"/></g><defs><linearGradient id="cb" x1="0" y1="0" x2="1" y2="1"><stop offset="0" stop-color="#ffffff"/><stop offset="1" stop-color="#e4f1f8"/></linearGradient></defs><path d="M4.5 15 L9.5 8.5 H28.5 V26.5 L23.5 32.5 H4.5Z" fill="url(#cb)" stroke="#9ed5ee" stroke-width="1.2"/><path d="M4.5 15 L9.5 8.5 H28.5 L23.5 15Z" fill="#a9dcf2"/><path d="M23.5 15 L28.5 8.5 V26.5 L23.5 32.5Z" fill="#58a7cf"/><path d="M14 30.5 L20.8 36 L35 23.5" fill="none" stroke="#3a3e41" stroke-width="3.8"/></svg>
<div class="t c" style="left:1463px;top:127.5px;">特征要求</div>
<svg style="left:1504px;top:78px" width="19" height="19" viewBox="0 0 19 19"><g fill="#a6a9ab"><rect x="0" y="0" width="2" height="2"/><rect x="0" y="5.2" width="2" height="2"/><rect x="0" y="10.4" width="2" height="2"/><rect x="0" y="15.6" width="2" height="2"/><rect x="5.2" y="0" width="2" height="2"/><rect x="5.2" y="5.2" width="2" height="2"/><rect x="5.2" y="10.4" width="2" height="2"/><rect x="5.2" y="15.6" width="2" height="2"/><rect x="10.4" y="0" width="2" height="2"/><rect x="10.4" y="5.2" width="2" height="2"/><rect x="10.4" y="10.4" width="2" height="2"/><rect x="10.4" y="15.6" width="2" height="2"/><rect x="15.6" y="0" width="2" height="2"/><rect x="15.6" y="5.2" width="2" height="2"/><rect x="15.6" y="10.4" width="2" height="2"/><rect x="15.6" y="15.6" width="2" height="2"/></g><rect x="4" y="4.5" width="13.5" height="12.5" fill="#f2f3f4" stroke="#c3c7c9" stroke-width=".9"/><path d="M6 5 V16 H17.5Z" fill="#bfe6f6" stroke="#2f9fd6" stroke-width="1.6"/><path d="M3 2 L19 18.5" stroke="#1f6f9e" stroke-width="1.8"/></svg>
<div class="a" style="left:1498px;top:106px;width:30px;height:30px;background:#e0e1e3;border:1px solid #bfc3c5"></div>
<div class="a" style="left:1498px;top:140px;width:30px;height:30px;background:#e0e1e3;border:1px solid #bfc3c5"></div>
<svg style="left:1504px;top:112px" width="20" height="20" viewBox="0 0 20 20"><g fill="#8c8f91"><rect x="0" y="0" width="2" height="2"/><rect x="0" y="5.2" width="2" height="2"/><rect x="0" y="10.4" width="2" height="2"/><rect x="0" y="15.6" width="2" height="2"/><rect x="5.2" y="0" width="2" height="2"/><rect x="5.2" y="5.2" width="2" height="2"/><rect x="5.2" y="10.4" width="2" height="2"/><rect x="5.2" y="15.6" width="2" height="2"/><rect x="10.4" y="0" width="2" height="2"/><rect x="10.4" y="5.2" width="2" height="2"/><rect x="10.4" y="10.4" width="2" height="2"/><rect x="10.4" y="15.6" width="2" height="2"/><rect x="15.6" y="0" width="2" height="2"/><rect x="15.6" y="5.2" width="2" height="2"/><rect x="15.6" y="10.4" width="2" height="2"/><rect x="15.6" y="15.6" width="2" height="2"/></g><path d="M7 14.5 L0 9.5 L8.5 1.5 L16.5 9" fill="none" stroke="#c6c9cb" stroke-width="1.3"/><circle cx="7" cy="15.2" r="2.2" fill="#7fd0f3" stroke="#1f8fc9" stroke-width="1.3"/><circle cx="17" cy="10" r="2.2" fill="#7fd0f3" stroke="#1f8fc9" stroke-width="1.3"/></svg>
<svg style="left:1505px;top:147px" width="18" height="18" viewBox="0 0 18 18"><g fill="#7a7d7f"><rect x="0" y="0" width="2" height="2"/><rect x="0" y="5.2" width="2" height="2"/><rect x="0" y="10.4" width="2" height="2"/><rect x="0" y="15.6" width="2" height="2"/><rect x="5.2" y="0" width="2" height="2"/><rect x="5.2" y="5.2" width="2" height="2"/><rect x="5.2" y="10.4" width="2" height="2"/><rect x="5.2" y="15.6" width="2" height="2"/><rect x="10.4" y="0" width="2" height="2"/><rect x="10.4" y="5.2" width="2" height="2"/><rect x="10.4" y="10.4" width="2" height="2"/><rect x="10.4" y="15.6" width="2" height="2"/><rect x="15.6" y="0" width="2" height="2"/><rect x="15.6" y="5.2" width="2" height="2"/><rect x="15.6" y="10.4" width="2" height="2"/><rect x="15.6" y="15.6" width="2" height="2"/></g><path d="M3.5 3.5 H14 V6.5 H11 V11 H14 V14 H3.5 V11 H6.5 V6.5 H3.5Z" fill="#9fdcf5" stroke="#1f8fc9" stroke-width="1.3"/></svg>
<div class="t " style="left:1457px;top:179.5px;">检查</div>
<svg style="left:1491px;top:185px" width="11" height="8" viewBox="0 0 11 8"><path d="M0.5 0.9 h9 l-4.5 5.2Z" fill="#5a5f62"/></svg>
<svg style="left:1542px;top:85px" width="37" height="26" viewBox="0 0 37 26"><path d="M1 12.5 L9.5 12.5 L14 17.5 L30 .8 L36.2 1.5 L13 25 Z" fill="#38935a" stroke="#2c7a48" stroke-width=".8"/><path d="M1 12.5 L9.5 12.5 L14 17.5 L30 .8 L36.2 1.5" fill="none" stroke="#c8e01e" stroke-width="1.6"/></svg>
<div class="t c" style="left:1560px;top:127.5px;">确定</div>
<svg style="left:1597px;top:89px" width="25" height="20" viewBox="0 0 25 20"><path d="M.5 .5 H8 L12.5 6.5 L17 .5 H24.5 L16.2 9.8 L24.5 19.5 H17 L12.5 13.2 L8 19.5 H.5 L8.8 9.8Z" fill="#45494c"/></svg>
<div class="t c" style="left:1610px;top:127.5px;">取消</div>
<div class="t c" style="left:1586px;top:179.5px;">关闭</div>
<!-- p5 -->
<div class="a" id="left"></div><div class="a" id="canvas"></div>
<div class="a" style="left:343px;top:205px;width:3px;height:773px;background:#d9dfdf"></div>
<div class="a" style="left:94px;top:205px;width:252px;height:36.5px;background:#dde2e3"></div>
<svg style="left:12px;top:211px" width="18" height="24" viewBox="0 0 18 24"><g fill="#f7f9fb" stroke="#45494c" stroke-width="1.4"><rect x="1.2" y="1" width="5" height="5"/><rect x="1.2" y="9.5" width="5" height="5"/><rect x="1.2" y="18" width="5" height="5"/><rect x="11.2" y="9.5" width="5" height="5"/></g><path d="M3.7 6 V9.5 M3.7 14.5 V18 M6.2 12 H11.2" stroke="#45494c" stroke-width="1.4"/></svg>
<div class="t " style="left:38px;top:213.5px;">模型树</div>
<svg style="left:103px;top:211px" width="25" height="25" viewBox="0 0 25 25"><path d="M0.5 0.8 h4.5 l1.5 1.8 h7.5 v9.7 h-13.5Z" fill="#f6e3a8" stroke="#c9a85a" stroke-width=".9"/><path d="M0.5 4.8 h13.5 v7.5 h-13.5Z" fill="#fbf0cf" stroke="#c9a85a" stroke-width=".7"/><path d="M5 6 h4.5 l1.5 1.8 h7.5 v9.7 h-13.5Z" fill="#f6e3a8" stroke="#c9a85a" stroke-width=".9"/><path d="M5 10 h13.5 v7.5 h-13.5Z" fill="#fbf0cf" stroke="#c9a85a" stroke-width=".7"/><path d="M9.5 11.5 h4.5 l1.5 1.8 h7.5 v9.7 h-13.5Z" fill="#f6e3a8" stroke="#c9a85a" stroke-width=".9"/><path d="M9.5 15.5 h13.5 v7.5 h-13.5Z" fill="#fbf0cf" stroke="#c9a85a" stroke-width=".7"/></svg>
<div class="t " style="left:132px;top:213.5px;">文件夹浏览器</div>
<svg style="left:242px;top:214px" width="22" height="20" viewBox="0 0 22 20"><path d="M.5 2 h6.5 l2 2.2 h12.5 v14.8 h-21Z" fill="#f6e3a8" stroke="#c9a85a" stroke-width=".9"/><path d="M.5 6 h21 v13 h-21Z" fill="#fcf2d3" stroke="#c9a85a" stroke-width=".8"/><path d="M11 8.5 V16.5 M7 12.5 H15 M8.2 9.7 L13.8 15.3 M13.8 9.7 L8.2 15.3" stroke="#1f5f9e" stroke-width="1.3"/></svg>
<div class="t " style="left:271px;top:213.5px;">收藏夹</div>
<div class="t " style="left:35px;top:249.5px;font-weight:bold">模型树</div>
<svg style="left:198px;top:246px" width="21" height="26" viewBox="0 0 21 26"><defs><linearGradient id="wd" x1="0" y1="0" x2="1" y2="0"><stop offset="0" stop-color="#f3deb0"/><stop offset=".5" stop-color="#e2c27f"/><stop offset="1" stop-color="#b98f4a"/></linearGradient></defs><path d="M.5 4 Q1 1.5 4 1.5 H11.5 Q13.5 1.8 14 5.5 L11 6 V7 H4.5 V5.5 H2.5 Q1 5.5 .5 4Z" fill="#8d9098" stroke="#5f626a" stroke-width=".7"/><path d="M3 3 H11" stroke="#c9cbd2" stroke-width="1.200"/><rect x="4.8" y="7" width="5.6" height="18.5" rx="1.2" fill="url(#wd)" stroke="#8e6b30" stroke-width=".6"/><path d="M17.8 1 V13" stroke="#a3a6b0" stroke-width="2"/><rect x="16" y="13" width="3.7" height="12.5" rx="1.2" fill="url(#wd)" stroke="#8e6b30" stroke-width=".6"/></svg>
<svg style="left:230px;top:256px" width="11" height="8" viewBox="0 0 11 8"><path d="M0.5 0.9 h9 l-4.5 5.2Z" fill="#5a5f62"/></svg>
<svg style="left:251px;top:247px" width="21" height="25" viewBox="0 0 21 25"><path d="M1 .8 H14 L20 6.5 V24.2 H1Z" fill="#f0f5f8" stroke="#b0bcc2" stroke-width="1"/><path d="M14 .8 V6.5 H20" fill="#dfe8ed" stroke="#b0bcc2" stroke-width=".9"/><g fill="none" stroke="#8a8f92" stroke-width=".9"><circle cx="5.5" cy="9" r="1.5"/><circle cx="5.5" cy="14" r="1.5"/><circle cx="5.5" cy="19" r="1.5"/></g><path d="M9.5 9 H17 M9.5 14 H17 M9.5 19 H17" stroke="#8a8f92" stroke-width="1.1"/></svg>
<svg style="left:282px;top:256px" width="11" height="8" viewBox="0 0 11 8"><path d="M0.5 0.9 h9 l-4.5 5.2Z" fill="#5a5f62"/></svg>
<svg style="left:307px;top:248px" width="25" height="24" viewBox="0 0 25 24"><g fill="none" stroke="#c9cdcf" stroke-width="1.1"><rect x=".8" y=".8" width="4.5" height="4.5"/><rect x=".8" y="9" width="4.5" height="4.5"/><rect x=".8" y="17.5" width="4.5" height="4.5"/><path d="M3 5.3 V9 M3 13.5 V17.5 M5.3 11.2 H10 M10 1 V20 M10 1 H13 M15 1 H21 V14" stroke-dasharray="3 1.2"/></g><ellipse cx="17" cy="16" rx="5.5" ry="3.3" fill="none" stroke="#b4b8ba" stroke-width="1.3"/><circle cx="17" cy="16" r="1.6" fill="#b4b8ba"/><path d="M10 9.5 L24 23" stroke="#b4b8ba" stroke-width="1.4"/></svg>
<svg style="left:14px;top:285px" width="20" height="18" viewBox="0 0 20 18"><path d="M1 1 H19 L12 9.5 V16.5 H8 V9.5Z" fill="#f7f9fb" stroke="#6a6f72" stroke-width="1.4" stroke-linejoin="round"/></svg>
<div class="a" style="left:38px;top:277.5px;width:247px;height:33px;background:#fff;border:1px solid #a5b1b5"></div>
<svg style="left:268px;top:288.5px" width="10" height="10" viewBox="0 0 10 10"><path d="M.8 .8 L9.2 9.2 M9.2 .8 L.8 9.2" stroke="#b4b8ba" stroke-width="1.3"/></svg>
<svg style="left:291px;top:290px" width="11" height="8" viewBox="0 0 11 8"><path d="M0.5 0.9 h9 l-4.5 5.2Z" fill="#5a5f62"/></svg>
<svg style="left:315px;top:287px" width="13" height="13" viewBox="0 0 13 13"><path d="M6.5 0 V13 M0 6.5 H13" stroke="#777c7f" stroke-width="3"/></svg>
<svg style="left:14px;top:321px" width="17" height="16" viewBox="0 0 17 16"><path d="M.8 4 H12.5 V15.2 H.8Z" fill="#aee4f7" stroke="#3b9fd0" stroke-width="1"/><path d="M.8 4 L3.5 1 H16 L12.5 4Z" fill="#d6f1fb" stroke="#5ab4dc" stroke-width=".8"/><path d="M12.5 4 L16 1 V12.5 L12.5 15.2Z" fill="#3f9dcb" stroke="#3b8fc0" stroke-width=".8"/></svg>
<div class="t l" style="left:39px;top:319.5px;font-size:15.4px;transform:scaleX(.95)">PRT0001.PRT</div>
<svg style="left:19.5px;top:348px" width="10" height="11" viewBox="0 0 10 11"><path d="M.5 .5 L9 5.5 L.5 10.5Z" fill="#7d8285"/></svg>
<svg style="left:39px;top:343px" width="19" height="21" viewBox="0 0 19 21"><rect x=".8" y="4" width="17" height="16" rx="1.5" fill="#f3f4f5" stroke="#a9aeb1" stroke-width="1"/><path d="M6 4 V2.5 Q9.3 -.5 12.5 2.5 V4" fill="#e3e5e6" stroke="#a9aeb1" stroke-width=".9"/><rect x="3" y="6.5" width="12.5" height="11.5" fill="#fff" stroke="#d3d6d8" stroke-width=".6"/><rect x="4.5" y="9" width="8" height="4.5" fill="#9fd4f0" stroke="#2f8fc5" stroke-width=".9"/><path d="M7 17.5 L10 12.5 H16 L13 17.5Z" fill="#d9b8ee" stroke="#8a3fc0" stroke-width="1.1"/></svg>
<div class="t " style="left:64px;top:343.5px;">设计项</div>
<svg style="left:38px;top:371.5px" width="19" height="12" viewBox="0 0 19 12"><path d="M5.5 1 H17.8 L13.5 11 H1.2Z" fill="none" stroke="#8a6a2e" stroke-width="1.5"/></svg>
<div class="t l" style="left:64px;top:367.5px;font-size:15.4px;transform:scaleX(0.93)">RIGHT</div>
<svg style="left:38px;top:395.5px" width="19" height="12" viewBox="0 0 19 12"><path d="M5.5 1 H17.8 L13.5 11 H1.2Z" fill="none" stroke="#8a6a2e" stroke-width="1.5"/></svg>
<div class="t l" style="left:64px;top:391.5px;font-size:15.4px;transform:scaleX(0.95)">TOP</div>
<svg style="left:38px;top:419.5px" width="19" height="12" viewBox="0 0 19 12"><path d="M5.5 1 H17.8 L13.5 11 H1.2Z" fill="none" stroke="#8a6a2e" stroke-width="1.5"/></svg>
<div class="t l" style="left:64px;top:415.5px;font-size:15.4px;transform:scaleX(0.935)">FRONT</div>
<svg style="left:38px;top:439px" width="20" height="21" viewBox="0 0 20 21"><path d="M7.5 1.5 V13 H18 M7.5 13 L1.5 19" fill="none" stroke="#8a6a2e" stroke-width="1.4"/><path d="M5.8 3 L7.5 .3 L9.2 3Z M16.8 11.3 L19.6 13 L16.8 14.7Z M.5 17.5 V20.2 H3.3Z" fill="#8a6a2e" stroke="#8a6a2e" stroke-width=".6"/></svg>
<div class="t l" style="left:64px;top:439.5px;font-size:15.4px;transform:scaleX(.875)">PRT_CSYS_DEF</div>
<div class="a" style="left:10px;top:467.5px;width:327px;height:3.5px;background:#5bc03c"></div>
<svg style="left:18px;top:486px" width="11" height="10" viewBox="0 0 11 10"><path d="M.3 .5 H10.7 L5.5 9.5Z" fill="#7d8285"/></svg>
<svg style="left:38px;top:481px" width="20" height="20" viewBox="0 0 20 20"><path d="M9.5 0 V20" stroke="#6a6f72" stroke-width="1" stroke-dasharray="5 1.5 1.5 1.5"/><circle cx="4" cy="10.5" r="3.3" fill="#f7f9fb" stroke="#a9aeb1" stroke-width="1.2"/><circle cx="15" cy="10.5" r="3.3" fill="#f7f9fb" stroke="#2f9fd6" stroke-width="1.8"/><path d="M4 7.2 Q9.5 4.5 15 7.2" fill="none" stroke="#a9aeb1" stroke-width="1"/></svg>
<svg style="left:63.5px;top:484px" width="9" height="9" viewBox="0 0 9 9"><path d="M4.5 0 V9 M0 4.5 H9 M1.3 1.3 L7.7 7.7 M7.7 1.3 L1.3 7.7" stroke="#f2e600" stroke-width="1.5"/></svg>
<div class="t " style="left:75px;top:481.5px;">旋转 1</div>
<svg style="left:63px;top:505px" width="21" height="20" viewBox="0 0 21 20"><rect x=".8" y="4.5" width="15" height="14.7" fill="#f7f8f9" stroke="#8c9194" stroke-width="1.1"/><path d="M4.5 15.5 L6 11.5 L16.5 1.5 L19 4 L8.5 14Z" fill="#e9e2d0" stroke="#5d6265" stroke-width=".9"/><path d="M16 2 L17.5 .6 Q19.5 .2 20 2.5 L18.6 4.2Z" fill="#d33a2c"/><path d="M4.5 15.5 L5.2 13.5 L6.5 14.8Z" fill="#45494c"/></svg>
<svg style="left:89px;top:508px" width="9" height="9" viewBox="0 0 9 9"><path d="M4.5 0 V9 M0 4.5 H9 M1.3 1.3 L7.7 7.7 M7.7 1.3 L1.3 7.7" stroke="#f2e600" stroke-width="1.5"/></svg>
<div class="t " style="left:100px;top:505.5px;">截面 1</div>
<!-- p6 -->
<svg style="left:0;top:0" width="1920" height="1029" viewBox="0 0 1920 1029"><path d="M346 666.5 H1920" stroke="#0aa09a" stroke-width="1.2" stroke-dasharray="7 7"/><path d="M903.1 205 V978" stroke="#c230d8" stroke-width="2.2" stroke-dasharray="7 2.5 3 3.5" stroke-dashoffset="3"/><path d="M903.7 205 V978" stroke="#12a89c" stroke-width="1" stroke-dasharray="2 14" stroke-dashoffset="-8" opacity=".8"/><path d="M880 359.2 H903.1" stroke="#29e0f0" stroke-width="1.3"/><circle cx="880" cy="359.2" r="1.8" fill="#29e0f0"/><circle cx="903.1" cy="359.2" r="3.1" fill="#f0304a"/><circle cx="903.1" cy="337" r="1.8" fill="#35e04a"/><path d="M1021.6 356.3 L975.6 450.2 L969.9 448.2 L972.2 473.1 L990.6 455.9 L985.6 453.6Z" fill="#f93538"/><path d="M903.1 530.8 H1052.7 A149.9 149.9 0 0 1 903.1 666.3Z" fill="#edc2eb"/><clipPath id="shp"><path d="M903.1 530.8 H1052.7 A149.9 149.9 0 0 1 903.1 666.3Z"/></clipPath><rect x="1005" y="604" width="18.5" height="19" fill="#ecdcec" clip-path="url(#shp)"/><g stroke="#00b2f0" stroke-width="1.1" fill="none"><path d="M903.1 485.2 H923.5 M997 485.2 H1052.7 M1052.7 477.5 V530"/><path d="M1052.7 530.4 H1071"/><path d="M1064.6 531 A163.4 163.4 0 0 1 1045.9 604"/><path d="M1031.6 626.5 A163.4 163.4 0 0 1 914.8 690.9 H903.1"/><path d="M1005 628 L1096.3 728.2 H1121.6"/></g><path d="M903.1 530.8 H1052.7 A149.9 149.9 0 0 1 903.1 666.3Z" fill="none" stroke="#ff9f00" stroke-width="2.2"/><path d="M894 516 H912 M903.1 507 V525.7" stroke="#ff9f00" stroke-width="2.1"/><path d="M903.6 485.2 L914.6 483.1 L914.6 487.3 Z" fill="#00c400"/><path d="M1052.2 485.2 L1041.2 487.3 L1041.2 483.1 Z" fill="#00c400"/><path d="M903.6 690.9 L914.6 688.8 L914.6 693.0 Z" fill="#00c400"/><path d="M1064.6 532.0 L1066.7 541.9 L1063.2 542.1 Z" fill="#2aa0e0"/><path d="M1005.5 628.5 L1015.2 635.9 L1012.0 638.8 Z" fill="#00c400"/><circle cx="903.1" cy="530.4" r="1.9" fill="#2ab7e6"/><circle cx="1052.7" cy="530.4" r="1.9" fill="#2ab7e6"/><circle cx="903.1" cy="666.2" r="1.9" fill="#2ab7e6"/><circle cx="903.1" cy="516" r="1.9" fill="#2ab7e6"/><circle cx="926.3" cy="517.6" r="10.1" fill="#d3d4d8" opacity=".55"/><circle cx="925.7" cy="516.6" r="9.5" fill="#f5f5f6" stroke="#e1e2e4" stroke-width=".8"/><path d="M925.7 509.1 V524.6" stroke="#3a3d3f" stroke-width="1.4"/><circle cx="925.7" cy="514.6" r="2.7" fill="#a5e4f7" stroke="#2e9fcc" stroke-width="1"/><circle cx="881.4" cy="531.6" r="10.1" fill="#d3d4d8" opacity=".55"/><circle cx="880.8" cy="530.6" r="9.5" fill="#f5f5f6" stroke="#e1e2e4" stroke-width=".8"/><path d="M880.8 523.1 V538.6" stroke="#3a3d3f" stroke-width="1.4"/><circle cx="880.8" cy="528.6" r="2.7" fill="#a5e4f7" stroke="#2e9fcc" stroke-width="1"/><circle cx="914.9" cy="551.8" r="10.1" fill="#d3d4d8" opacity=".55"/><circle cx="914.3" cy="550.8" r="9.5" fill="#f5f5f6" stroke="#e1e2e4" stroke-width=".8"/><path d="M914.3 543.3 V558.8" stroke="#3a3d3f" stroke-width="1.4"/><circle cx="914.3" cy="548.8" r="2.7" fill="#a5e4f7" stroke="#2e9fcc" stroke-width="1"/><circle cx="926.6" cy="599.8" r="10.1" fill="#d3d4d8" opacity=".55"/><circle cx="926" cy="598.8" r="9.5" fill="#f5f5f6" stroke="#e1e2e4" stroke-width=".8"/><path d="M926 592.3 V597.6 M926 600 V605.3" stroke="#45494c" stroke-width="1.6"/><circle cx="904.4" cy="645.3" r="10.1" fill="#d3d4d8" opacity=".55"/><circle cx="903.8" cy="644.3" r="9.5" fill="#f5f5f6" stroke="#e1e2e4" stroke-width=".8"/><path d="M896.3 644.3 H911.8" stroke="#3a3d3f" stroke-width="1.4"/><circle cx="901.8" cy="644.3" r="2.7" fill="#a5e4f7" stroke="#2e9fcc" stroke-width="1"/><circle cx="888.6" cy="683" r="10.1" fill="#d3d4d8" opacity=".55"/><circle cx="888" cy="682" r="9.5" fill="#f5f5f6" stroke="#e1e2e4" stroke-width=".8"/><path d="M888 676.5 V686.5 M882 686.5 H894" stroke="#45494c" stroke-width="1.4"/><circle cx="979.6" cy="509.5" r="10.1" fill="#d3d4d8" opacity=".55"/><circle cx="979" cy="508.5" r="9.5" fill="#f5f5f6" stroke="#e1e2e4" stroke-width=".8"/><path d="M972.5 508.5 H985.5" stroke="#45494c" stroke-width="1.5"/><text x="939" y="491.4" style="font-family:'Liberation Mono',monospace;font-size:14.5px;fill:#00b2f0;letter-spacing:0" transform="translate(939 491.4) scale(1 1.22) translate(-939 -491.4)">21.28</text><text x="1020.5" y="620.6" style="font-family:'Liberation Mono',monospace;font-size:14.5px;fill:#00b2f0;letter-spacing:0" transform="translate(1020.5 620.6) scale(1 1.22) translate(-1020.5 -620.6)">90.00</text><text x="1129.5" y="734" style="font-family:'Liberation Mono',monospace;font-size:14.5px;fill:#00b2f0;letter-spacing:0" transform="translate(1129.5 734) scale(1 1.22) translate(-1129.5 -734)">R 21.38</text></svg>
<!-- p7 -->
<div class="a" style="left:890px;top:212px;width:486px;height:37.5px;background:#f7f9fb;border:1px solid #a0a5a7"></div>
<div class="a" style="left:1311px;top:217.5px;width:29px;height:28.5px;background:#e0e1e3;border:1px solid #bdc1c3"></div>
<div class="a" style="left:1343px;top:217.5px;width:29px;height:28.5px;background:#e0e1e3;border:1px solid #bdc1c3"></div>
<svg style="left:899px;top:221px" width="20" height="20" viewBox="0 0 20 20"><rect x=".6" y=".6" width="17.5" height="17.5" fill="#f0f1f2" stroke="#c3c7c9" stroke-width="1.2"/><path d="M12.14 12.14 L18.14 18.14" stroke="#a9aeb1" stroke-width="3.2" stroke-linecap="round"/><path d="M12.64 12.64 L17.64 17.64" stroke="#d9dcde" stroke-width="1.2" stroke-linecap="round"/><circle cx="8.5" cy="8.5" r="5.2" fill="#e8f5fb" stroke="#2b83b0" stroke-width="1.5"/></svg>
<svg style="left:931px;top:221px" width="20" height="20" viewBox="0 0 20 20"><path d="M11.84 11.84 L17.84 17.84" stroke="#a9aeb1" stroke-width="3.2" stroke-linecap="round"/><path d="M12.34 12.34 L17.34 17.34" stroke="#d9dcde" stroke-width="1.2" stroke-linecap="round"/><circle cx="7.5" cy="7.5" r="6.2" fill="#e8f5fb" stroke="#2b83b0" stroke-width="1.5"/><path d="M4 7.5 H11 M7.5 4 V11" stroke="#1f6fa0" stroke-width="2"/></svg>
<svg style="left:963px;top:221px" width="20" height="20" viewBox="0 0 20 20"><path d="M11.84 11.84 L17.84 17.84" stroke="#a9aeb1" stroke-width="3.2" stroke-linecap="round"/><path d="M12.34 12.34 L17.34 17.34" stroke="#d9dcde" stroke-width="1.2" stroke-linecap="round"/><circle cx="7.5" cy="7.5" r="6.2" fill="#e8f5fb" stroke="#2b83b0" stroke-width="1.5"/><path d="M4 7.5 H11" stroke="#1f6fa0" stroke-width="2"/></svg>
<svg style="left:995px;top:221px" width="20" height="20" viewBox="0 0 20 20"><defs><linearGradient id="rp" x1="0" y1="0" x2="1" y2="1"><stop offset="0" stop-color="#b9e0f0"/><stop offset="1" stop-color="#4f9fc4"/></linearGradient></defs><rect x=".6" y=".8" width="18.8" height="18.4" fill="url(#rp)" stroke="#b4b8ba" stroke-width="1.2"/><path d="M1.2 19 V6 Q9 3.5 14 8.5 L5 19Z" fill="#fdfdfd"/><path d="M4 19 L16 7.5" stroke="#1f5f86" stroke-width="1.8"/></svg>
<svg style="left:1027px;top:221px" width="21" height="21" viewBox="0 0 21 21"><path d="M1 6 L5.5 1 H19.5 V14 L15 19.5 H1Z" fill="#fdfdfe" stroke="#1f6f9a" stroke-width="1.5"/><path d="M1 6 L5.5 1 H19.5 L15 6Z" fill="#bfe4f3" stroke="#1f6f9a" stroke-width="1.2"/><path d="M15 6 L19.5 1 V14 L15 19.5Z" fill="#5aa6ca" stroke="#1f6f9a" stroke-width="1.2"/><path d="M17.5 21.5 h3.5 v-3.5Z" fill="#5d6265"/></svg>
<svg style="left:1059px;top:221px" width="21" height="21" viewBox="0 0 21 21"><path d="M.8 9 L5 1.5 H15 L19.2 9 V18 H5.5Z" fill="#dff3fb" stroke="#48a9d8" stroke-width="1.3"/><path d="M15 1.5 L19.2 9 V18 H12.5 V9Z" fill="#6db3d6"/><path d="M.8 9 H12.5 L15 1.5 M12.5 9 V18" fill="none" stroke="#48a9d8" stroke-width="1.1"/><rect x="12.5" y="12" width="6" height="7.5" fill="#f3f4f5" stroke="#8d9294" stroke-width=".9"/><path d="M14.5 14.3 h2 M14.5 16.8 h2" stroke="#5d6265" stroke-width="1.2"/><path d="M17.5 21.5 h3.5 v-3.5Z" fill="#5d6265"/></svg>
<svg style="left:1091px;top:221px" width="21" height="21" viewBox="0 0 21 21"><rect x=".6" y=".6" width="17" height="17.5" fill="#fbfbfb" stroke="#b9bdbf" stroke-width="1.1"/><path d="M.6 4.5 H17.6 M.6 8.5 H17.6 M.6 12.5 H17.6 M4.5 .6 V18" stroke="#c9cdcf" stroke-width="1"/><rect x="6.5" y="11.5" width="13.5" height="8.5" rx="1.5" fill="#3f4447"/><rect x="10.5" y="9.8" width="5.5" height="2.5" fill="#3f4447"/><circle cx="13.3" cy="15.7" r="2.9" fill="#6a6f72" stroke="#e6e8e9" stroke-width="1"/></svg>
<svg style="left:1123px;top:221px" width="21" height="21" viewBox="0 0 21 21"><path d="M.8 6.5 L3.5 3.5 H16 V16 L13.5 19 H.8Z" fill="#fdfdfe" stroke="#9fd5ee" stroke-width="1.2"/><path d="M.8 6.5 L3.5 3.5 H16 L13.5 6.5Z" fill="#cdeaf6"/><path d="M13.5 6.5 L16 3.5 V16 L13.5 19Z" fill="#9fd2ea"/><path d="M21 12.3 H16.5" stroke="#3f4447" stroke-width="1.8"/><path d="M14.3 12.3 L18 9.3 V15.3Z" fill="#3f4447"/></svg>
<svg style="left:1155px;top:221px" width="21" height="21" viewBox="0 0 21 21"><path d="M1 1 L5.5 5.5 M5.5 1 L1 5.5" stroke="#8a6420" stroke-width="1.6"/><path d="M12.5 .5 L10.8 4.5 M9.5 7.5 L7.8 11.5 M6.5 14.5 L4.8 18.5 M3 14.5 L1.3 18.5" stroke="#8a6420" stroke-width="1.7"/><path d="M13 9 V15.5 H19 M13 15.5 L9.5 18.5" fill="none" stroke="#8a6420" stroke-width="1.3"/><path d="M11.3 10.5 L13 7.8 L14.7 10.5Z M18 13.8 L20.8 15.5 L18 17.2Z M8.5 17 V19.5 H11Z" fill="#8a6420"/><path d="M17.5 21.5 h3.5 v-3.5Z" fill="#5d6265"/></svg>
<svg style="left:1187.5px;top:221.5px" width="20" height="20" viewBox="0 0 20 20"><path d="M12.8 .8 H19.2 V10 H13.4 M12.8 3.6 H16.4 V7.2 H13.4" fill="none" stroke="#7d8285" stroke-width="1.3"/><path d="M4 6 V4.2 Q4 2.6 6 2.6 H9" fill="none" stroke="#45494c" stroke-width="1.9"/><path d="M8.2 -.2 L12 2.6 L8.2 5.4Z" fill="#45494c"/><path d="M.3 8.2 L7.6 6.6 L14.6 13.8 V19.7 H5.8 L.3 12Z" fill="#d4effa" stroke="#3aa3d4" stroke-width="1"/><path d="M5.8 14.2 H14.6 V19.7 H5.8Z" fill="#4d9fc6"/><path d="M.3 8.2 L5.8 14.2 V19.7 L.3 12Z" fill="#7cc4e4"/><path d="M3 9 L7 8.2 L11.5 12.8 L7 12.9Z" fill="#fdfeff" stroke="#8fd0ec" stroke-width=".7"/></svg>
<svg style="left:1219px;top:221px" width="21" height="21" viewBox="0 0 21 21"><path d="M.8 8 L6 1 H20 V11.5 L14.5 19.5 H.8Z" fill="#f4f5f6" stroke="#c3c7c9" stroke-width="1"/><path d="M.8 8 L6 1 H20 L14.5 8Z" fill="#bfe6f5" stroke="#9fd2ea" stroke-width=".8"/><path d="M.8 8 H14.5 V15 H.8Z" fill="#d6effa"/><path d="M14.5 8 L20 1 V11.5 L14.5 19.5Z" fill="#dde9ef" stroke="#c3c7c9" stroke-width=".8"/></svg>
<svg style="left:1251px;top:221px" width="21" height="21" viewBox="0 0 21 21"><path d="M.8 5.5 L9 1 L20 1.5 V14 L13.5 20 L3 16Z" fill="#cfeaf6" stroke="#58a9d0" stroke-width="1.2"/><path d="M5.5 7.5 L13.5 6.5 V20 M5.5 7.5 L3 16 M5.5 7.5 L.8 5.5 M13.5 6.5 L20 1.5" fill="none" stroke="#58a9d0" stroke-width="1"/><path d="M5.5 7.5 L13.5 6.5 V20 L3 16Z" fill="#8cc8e4" opacity=".8"/></svg>
<svg style="left:1283px;top:221px" width="22" height="21" viewBox="0 0 22 21"><path d="M1 .5 V12.5 M17 .5 V12.5" stroke="#3f4447" stroke-width="1.3"/><path d="M3 4 H15" stroke="#3f4447" stroke-width="1.3"/><path d="M1.5 4 L5 1.5 V6.5Z M16.5 4 L13 1.5 V6.5Z" fill="#3f4447"/><path d="M6.5 11.5 H11.5 M9 7.5 V11.5" stroke="#2f9fd6" stroke-width="1.5"/><circle cx="2.2" cy="17" r="1.9" fill="#f0f1f2" stroke="#b9bdbf" stroke-width=".9"/><path d="M7.5 16.5 Q13.5 10.5 19.5 16.5 Q13.5 22.5 7.5 16.5Z" fill="#3f4447"/><circle cx="13.5" cy="16.5" r="2" fill="#f7f9fb"/><circle cx="13.5" cy="16.5" r=".9" fill="#3f4447"/><path d="M18.5 21.5 h3.5 v-3.5Z" fill="#5d6265"/></svg>
<svg style="left:1315px;top:221px" width="22" height="21" viewBox="0 0 22 21"><rect x=".6" y=".6" width="11.5" height="7.5" fill="#fdf3d3" stroke="#c3c7c9" stroke-width="1"/><path d="M12 4.5 H20 M18.5 4.5 V10" stroke="#3f4447" stroke-width="1.5" fill="none"/><path d="M14.5 12.5 L20 7.5 L20.5 12.8Z" fill="#3f4447"/><path d="M9 16.5 Q15 10.5 21 16.5 Q15 22.5 9 16.5Z" fill="#3f4447"/><circle cx="15" cy="16.5" r="2" fill="#f7f9fb"/><circle cx="15" cy="16.5" r=".9" fill="#3f4447"/></svg>
<svg style="left:1347px;top:221px" width="21" height="21" viewBox="0 0 21 21"><path d="M4.5 3.5 L10.5 10 L4 17 M10.5 10 L17 9.5" fill="none" stroke="#3f4447" stroke-width="1.4"/><circle cx="4.5" cy="3.5" r="2.9" fill="#8fc98a" stroke="#5a9e55" stroke-width=".8"/><circle cx="17" cy="9.5" r="2.9" fill="#ec8a84" stroke="#c8524b" stroke-width=".8"/><circle cx="4" cy="17" r="2.9" fill="#4c9fcf" stroke="#2e7fae" stroke-width=".8"/></svg>
<!-- p8 -->
<div class="a" id="status"></div><div class="a" id="dark"></div>
<div class="a" style="left:45px;top:1027px;width:8px;height:2px;background:#d9432e;border-radius:3px 3px 0 0"></div>
<div class="a" style="left:7px;top:985px;width:26px;height:30px;background:#e0e1e3;border:1px solid #b9bdbf"></div>
<svg style="left:10px;top:990px" width="21" height="20" viewBox="0 0 21 20"><defs><linearGradient id="sb" x1="0" y1="0" x2="0" y2="1"><stop offset="0" stop-color="#ffffff"/><stop offset="1" stop-color="#c3d9e6"/></linearGradient></defs><rect x=".6" y=".6" width="18.8" height="18.6" fill="#f4f5f6" stroke="#c3c7c9" stroke-width="1"/><path d="M.6 4.5 H19.4" stroke="#b9bdbf" stroke-width="1.2"/><rect x=".8" y="5.5" width="5.5" height="13.5" fill="url(#sb)" stroke="#2e7fa8" stroke-width="1.3"/><path d="M8.5 16 Q14 10.5 20 16 Q14 21.5 8.5 16Z" fill="#3f4447"/><circle cx="14.2" cy="16" r="1.9" fill="#f7f9fb"/><circle cx="14.2" cy="16" r=".8" fill="#3f4447"/></svg>
<svg style="left:40px;top:990px" width="21" height="20" viewBox="0 0 21 20"><defs><radialGradient id="gl" cx=".4" cy=".3" r=".8"><stop offset="0" stop-color="#9fdcf7"/><stop offset=".6" stop-color="#2f9bd8"/><stop offset="1" stop-color="#1c6fae"/></radialGradient></defs><circle cx="10.5" cy="10" r="8.3" fill="url(#gl)"/><path d="M6 6 Q9 4 11 6.5 Q9 9 7 8.5Z M11 11 Q15 10 15.5 13 Q13 16 11 14Z" fill="#bfe8fa" opacity=".7"/><ellipse cx="10.5" cy="10" rx="11.5" ry="5" transform="rotate(-42 10.5 10)" fill="none" stroke="#3f4447" stroke-width="1.2"/><path d="M3 15.5 A8.3 8.3 0 0 1 16.5 3.5" fill="none" stroke="#2f9bd8" stroke-width="2.5" opacity=".0"/></svg>
<div class="a" style="left:70px;top:990px;width:20px;height:20px;border:1.5px solid #2e7fa8;border-radius:1.5px;background:linear-gradient(#ffffff,#c6d9e4)"></div>
<div class="a" style="left:103px;top:985px;width:1px;height:30px;background:#a9aeb1"></div>
<div class="a" style="left:1501px;top:985px;width:1px;height:30px;background:#c3c7c9"></div><div class="a" style="left:1505.5px;top:985px;width:1px;height:30px;background:#c3c7c9"></div><div class="a" style="left:1562px;top:985px;width:1px;height:30px;background:#c3c7c9"></div>
<div class="a" style="left:1509.5px;top:985px;width:50.5px;height:29.5px;background:#f3f4f5;border:1px solid #d3d6d8"></div><div class="a" style="left:1542.5px;top:986px;width:17px;height:27.5px;background:#d9dadc"></div>
<svg style="left:1517px;top:992px" width="18" height="15" viewBox="0 0 18 15"><rect x=".5" y="4" width="6.5" height="10.5" rx="1.5" fill="#c3c6c8"/><rect x="10.5" y="4" width="6.5" height="10.5" rx="1.5" fill="#c3c6c8"/><rect x="2" y=".5" width="4" height="4.5" fill="#c3c6c8"/><rect x="11.5" y=".5" width="4" height="4.5" fill="#c3c6c8"/><rect x="6.5" y="5.5" width="4.5" height="3.5" fill="#c3c6c8"/></svg>
<svg style="left:1546px;top:996px" width="11" height="8" viewBox="0 0 11 8"><path d="M0.5 0.9 h9 l-4.5 5.2Z" fill="#b9bdbf"/></svg>
<div class="a" style="left:1682px;top:986.5px;width:217px;height:27.5px;background:#f9fbfb;border:1px solid #a9aeb1"></div><div class="a" style="left:1879px;top:987px;width:1px;height:26.5px;background:#b4b9bb"></div>
<div class="t " style="left:1690px;top:990px;">所有草绘</div>
<svg style="left:1884px;top:997px" width="11" height="8" viewBox="0 0 11 8"><path d="M0.5 0.9 h9 l-4.5 5.2Z" fill="#5a5f62"/></svg>
<div class="t" id="wm" style="left:1386px;top:978px;font-size:29.4px;line-height:40px;height:40px;color:rgba(120,120,120,.62)">dooooit@dooooit_7000005</div>
</body></html>
